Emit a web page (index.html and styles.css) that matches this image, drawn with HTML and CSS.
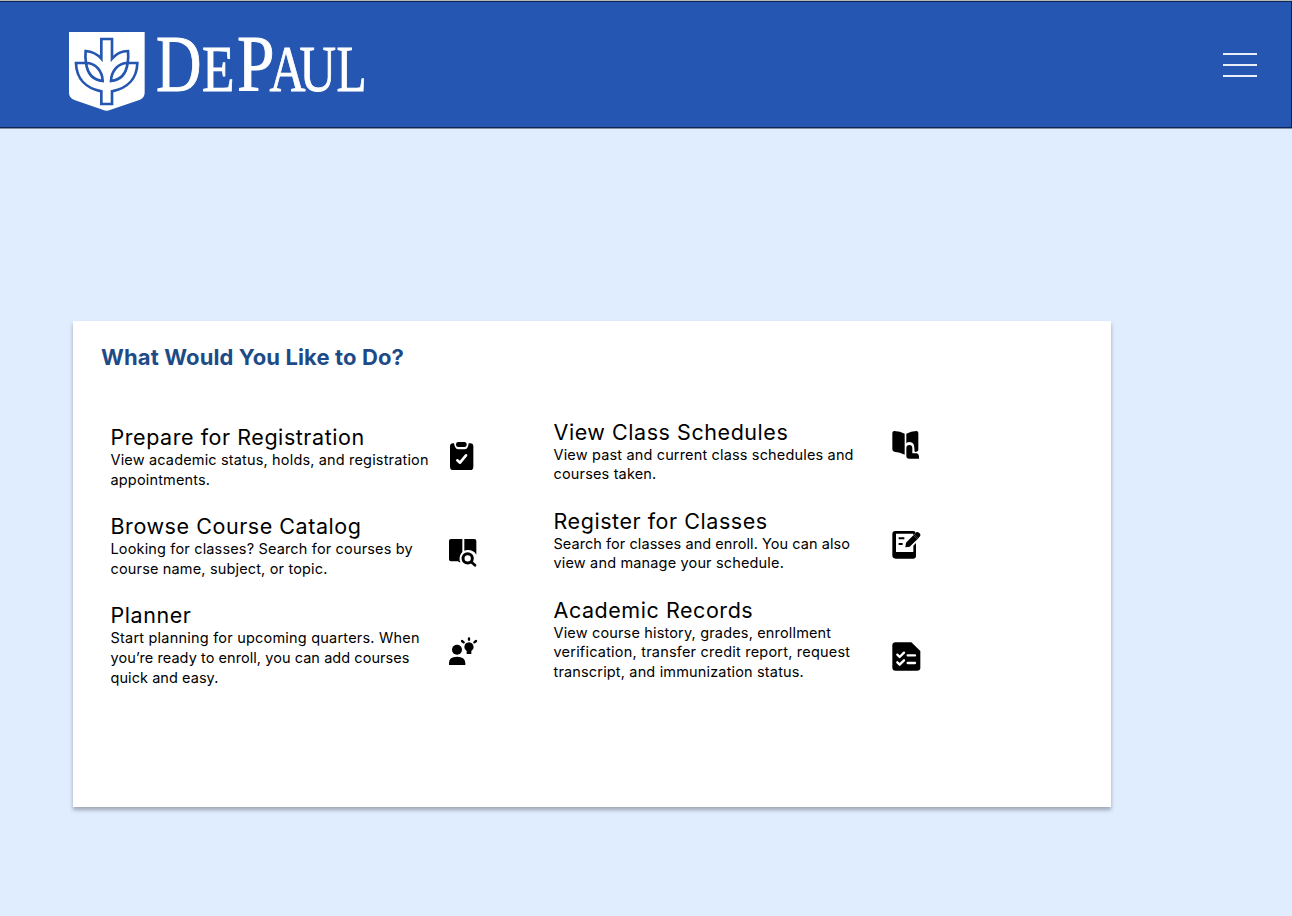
FILE: index.html
```html
<!DOCTYPE html>
<html lang="en">
<head>
<meta charset="utf-8">
<title>DePaul – Registration</title>
<link rel="stylesheet" href="styles.css">
</head>
<body>
<header class="topbar">
  <svg class="logo" width="315" height="92" viewBox="0 0 315 92" role="img" aria-label="DePaul">
    <g transform="scale(.33333)">
      <path fill="#fff" d="M27 24H254V206Q254 222 238 228L152 257Q140 263 128 257L43 228Q27 222 27 206Z"/>
      <g fill="none" stroke="#2456b2" stroke-width="8">
        <path d="M124 104V45H156V104Q176 81 204 81Q206 99 203 117H232C231 164 202 193 156 202V240H124V202C78 193 49 164 48 117H78Q75 99 77 81Q105 83 124 104Z"/>
        <path d="M78 117C108 117 127 142 128 171C98 168 82 147 78 117ZM203 117C173 117 154 142 153 171C183 168 199 147 203 117Z"/>
      </g>
    </g>
    <g class="wordmark">
      <text class="cap" x="96" y="66.7" textLength="45.5" lengthAdjust="spacingAndGlyphs">D</text>
      <text x="142" y="66.7" textLength="32.5" lengthAdjust="spacingAndGlyphs">E</text>
      <text class="cap" x="177" y="66.7" textLength="37.5" lengthAdjust="spacingAndGlyphs">P</text>
      <text x="209.5" y="66.7" textLength="36" lengthAdjust="spacingAndGlyphs">A</text>
      <text x="239.5" y="66.7" textLength="36.5" lengthAdjust="spacingAndGlyphs">U</text>
      <text x="276.5" y="66.7" textLength="30" lengthAdjust="spacingAndGlyphs">L</text>
    </g>
  </svg>
  <button class="menu" aria-label="Menu"><span></span><span></span><span></span></button>
</header>
<main class="card">
  <h1>What Would You Like to Do?</h1>
  <div class="columns">
    <section class="column left">
      <article class="item">
        <div class="copy"><h2>Prepare for Registration</h2>
        <p>View academic status, holds, and registration<br>appointments.</p></div>
        <svg class="icon clipboard" viewBox="0 0 135 150"><path d="M39 40H42Q45 58 55 58H74Q84 58 86 40H91Q100 40 100 49V110Q100 120 91 120H40Q30 120 30 110V49Q30 40 39 40Z"/><rect x="48" y="36" width="32" height="15" rx="7"/><path fill="none" stroke="#fff" stroke-width="8" stroke-linecap="round" stroke-linejoin="round" d="M52 91L60 98L78 76"/></svg>
      </article>
      <article class="item">
        <div class="copy"><h2>Browse Course Catalog</h2>
        <p>Looking for classes? Search for courses by<br>course name, subject, or topic.</p></div>
        <svg class="icon catalog" viewBox="0 0 135 135"><path d="M33 27H67V66Q57 76 59 92L62 97H58L54 94H33Q27 94 27 88V33Q27 27 33 27ZM73 27H103Q109 27 109 33V74Q101 60 84 60Q77 60 73 62Z"/><circle cx="83" cy="85" r="14" fill="none" stroke="#000" stroke-width="9"/><path d="M94 96L105 106" stroke="#000" stroke-width="8" stroke-linecap="round"/></svg>
      </article>
      <article class="item">
        <div class="copy"><h2>Planner</h2>
        <p><span class="wide">Start planning for upcoming quarters. When</span><br><span class="tight">you’re ready to enroll, you can add courses</span><br><span class="tight">quick and easy.</span></p></div>
        <svg class="icon planner" viewBox="0 0 135 135"><circle cx="51" cy="65" r="15"/><path d="M27 111V105Q27 86 51 86T76 105V111ZM80 78V69Q73 65 73 57Q74 44 87 43Q99 44 101 57Q101 65 94 69V78Z"/><path d="M87 31V35M66 39L71 43M108 39L103 43" fill="none" stroke="#000" stroke-width="7" stroke-linecap="round"/></svg>
      </article>
    </section>
    <section class="column right">
      <article class="item">
        <div class="copy"><h2>View Class Schedules</h2>
        <p>View past and current class schedules and<br>courses taken.</p></div>
        <svg class="icon schedule" viewBox="0 0 135 135"><path d="M31 27Q49 27 62 35V98Q48 91 31 89Q25 88 25 82V33Q25 27 31 27ZM67 35Q81 27 97 27Q103 27 103 33V83Q103 88 97 89L93 90Q91 87 91 78Q91 60 77 60Q70 60 67 64Z"/><path d="M67 79Q67 69 76 69Q85 69 85 79V94H98Q105 95 105 103V110H74Q67 110 67 103Z"/></svg>
      </article>
      <article class="item">
        <div class="copy"><h2>Register for Classes</h2>
        <p><span class="tight">Search for classes and enroll. You can also</span><br>view and manage your schedule.</p></div>
        <svg class="icon register" viewBox="0 0 135 135"><path fill-rule="evenodd" d="M34 27H88Q94 27 95 33L87 39V35H36V90H88V71L96 63V101Q96 110 87 110H35Q25 110 25 100V36Q25 27 34 27Z"/><path d="M64 76L66 62L88 40L100 52L77 74ZM91 37L97 31Q101 28 105 32L108 35Q111 39 108 43L103 49Z"/><path d="M88 40L91 37L103 49L100 52ZM44 46H61V52H44ZM44 63H56V69H44Z"/></svg>
      </article>
      <article class="item">
        <div class="copy"><h2>Academic Records</h2>
        <p>View course history, grades, enrollment<br><span class="wide">verification, transfer credit report, request</span><br>transcript, and immunization status.</p></div>
        <svg class="icon records" viewBox="0 0 135 135"><path d="M35 25H82L109 51V101Q109 110 99 110H35Q25 110 25 101V34Q25 25 35 25Z"/><path fill="none" stroke="#fff" stroke-width="7" stroke-linecap="round" stroke-linejoin="round" d="M40 62L47 69L60 56M40 85L47 92L60 79M71 64H93M71 87H93"/></svg>
      </article>
    </section>
  </div>
</main>
</body>
</html>
```
FILE: styles.css
```css
* { box-sizing: border-box; }
body {
  margin: 0;
  min-height: 916px;
  background: #e0edff;
  color: #000;
  font-family: Inter, "Open Sans", sans-serif;
}
.topbar {
  height: 129px;
  display: flex;
  justify-content: space-between;
  align-items: flex-start;
  padding: 22px 35px 0 60px;
  background: #2456b2;
  border-top: 1px solid #b7b9bb;
  border-bottom: 1px solid #8290a5;
  box-shadow: inset -1px 1px #0b2453, inset 0 -1px #0b2453;
}
.logo { display: block; margin-top: 1px; overflow: visible; }
.wordmark {
  fill: #fff;
  stroke: #fff;
  stroke-width: .9px;
  font-family: "Liberation Serif", serif;
  font-size: 66px;
}
.wordmark .cap { font-size: 80px; }
.menu {
  display: flex;
  flex-direction: column;
  gap: 9px;
  width: 34px;
  margin-top: 29.5px;
  padding: 0;
  border: 0;
  background: none;
}
.menu span { height: 2px; background: #e9eef8; }
.card {
  width: 1038px;
  height: 486px;
  margin: 192px 0 0 73px;
  padding: 23px 0 0 28px;
  background: #fff;
  box-shadow: 0 3px 4px rgba(0, 0, 0, .3);
}
h1, h2, p { margin: 0; white-space: nowrap; }
h1 {
  color: #1e4b87;
  font-size: 22px;
  font-weight: 700;
  line-height: 26px;
  letter-spacing: .12px;
}
.columns { display: flex; gap: 67px; padding-left: 9.5px; }
.left { padding-top: 53px; }
.right { padding-top: 47.5px; }
.item {
  display: flex;
  height: 89px;
  width: 376px;
}
.copy { width: 329.5px; flex: none; }
h2 {
  height: 27px;
  font-size: 21.5px;
  font-weight: 400;
  line-height: 28px;
  letter-spacing: .55px;
}
p { font-size: 14.5px; line-height: 19.8px; letter-spacing: .16px; }
.tight { letter-spacing: .06px; }
.wide { letter-spacing: .21px; }
.icon { width: 45px; height: 45px; flex: none; }
.clipboard { height: 50px; margin-top: 7px; }
.catalog { margin-top: 18px; }
.planner { margin-top: 27px; }
.schedule { margin-top: 4.5px; }
.register { margin-top: 15.5px; }
.records { margin-top: 38.5px; }
.right .icon { margin-left: .5px; }
```
